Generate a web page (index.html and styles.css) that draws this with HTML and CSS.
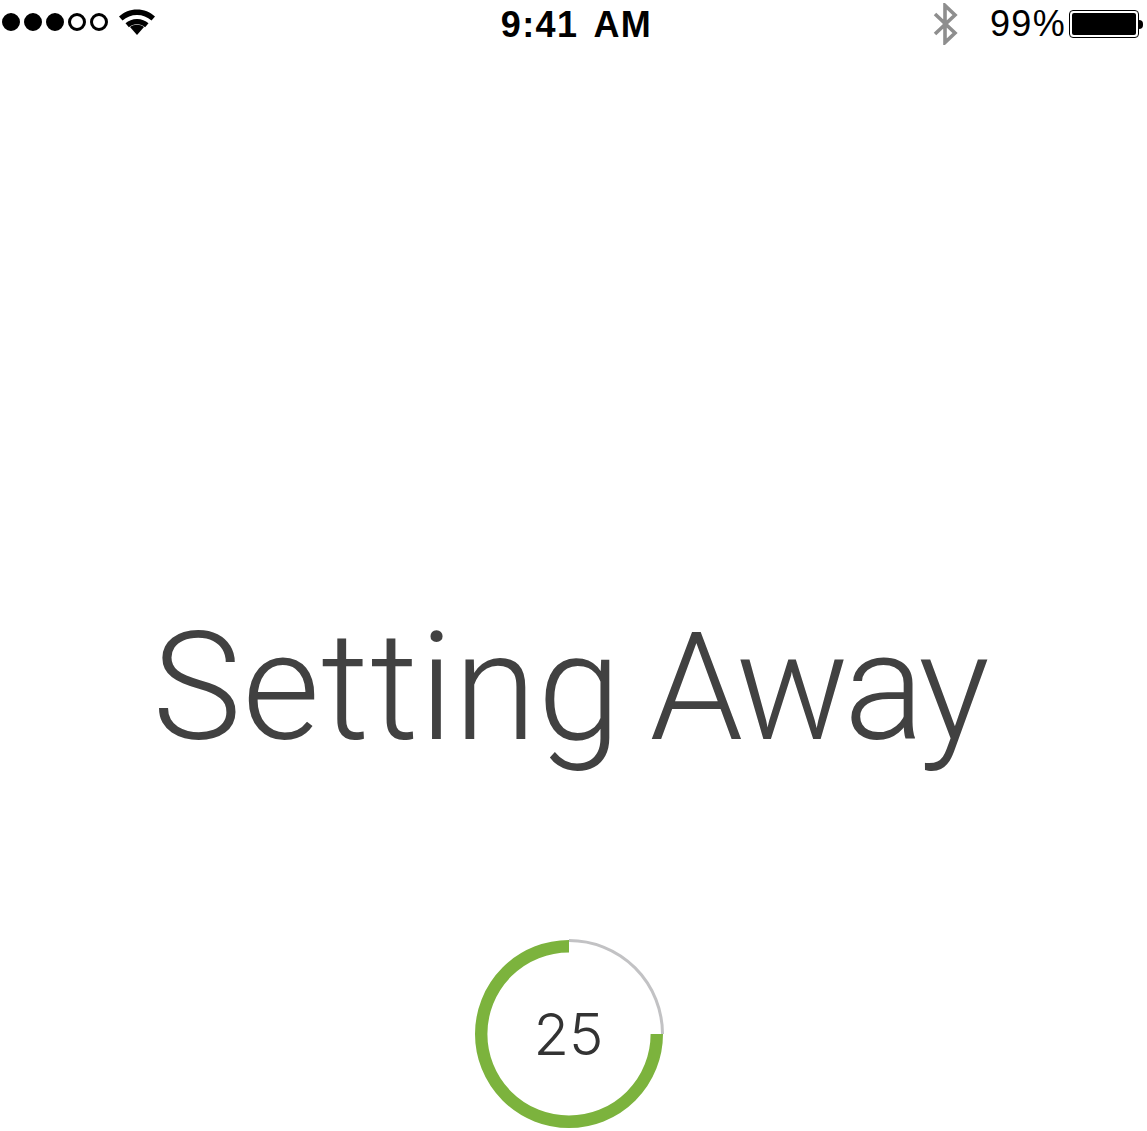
FILE: index.html
```html
<!DOCTYPE html>
<html lang="en">
<head>
<meta charset="utf-8">
<title>Setting Away</title>
<link rel="stylesheet" href="styles.css">
</head>
<body>
<main class="screen">
  <header class="status">
    <div class="status-left">
      <span class="dot on"></span><span class="dot on"></span><span class="dot on"></span><span class="dot"></span><span class="dot"></span>
      <svg class="wifi" width="38" height="30" viewBox="0 0 38 30"><path d="M19 2.500C12 2.500 6 5 1 9.500l3.500 4C8.500 10 13.500 8 19 8s10.500 2 14.500 5.500l3.500-4C32 5 26 2.500 19 2.500z"/><path d="M19 12c-4.500 0-8.500 1.600-11.500 4.300l3.400 3.900c2.200-1.900 5-3 8.100-3s5.900 1.100 8.100 3l3.400-3.900C27.500 13.600 23.500 12 19 12z"/><path d="M19 28l7-8c-1.900-1.400-4.300-2.200-7-2.200s-5.100.8-7 2.200z"/></svg>
    </div>
    <div class="clock">9:41 AM</div>
    <div class="status-right">
      <svg class="bt" width="26" height="42" viewBox="0 0 26 42"><path d="M3 11l20 19-10 9.500V2.500L23 12 3 31" fill="none" stroke="#8e8e8e" stroke-width="3.600"/></svg>
      <span class="pct">99%</span>
      <span class="battery"><span class="battery-fill"></span></span>
      <span class="nub"></span>
    </div>
  </header>
  <h1 class="title"><span class="word-one">Setting</span> <span class="word-two">Away</span></h1>
  <div class="ring">
    <svg width="190" height="190" viewBox="0 0 190 190">
      <path d="M95 1.500A93.500 93.500 0 0 1 188.500 95" fill="none" stroke="#c2c2c4" stroke-width="3"/>
      <path d="M182.800 95A87.800 87.800 0 1 1 95 7.200" fill="none" stroke="#7cb33d" stroke-width="12.400"/>
    </svg>
    <span class="count">25</span>
  </div>
</main>
</body>
</html>
```
FILE: styles.css
```css
html, body {
  margin: 0;
  padding: 0;
  background: #fff;
}
.screen {
  width: 1147px;
  height: 1131px;
  overflow: hidden;
  display: flex;
  flex-direction: column;
  align-items: center;
}
.status {
  box-sizing: border-box;
  width: 100%;
  height: 48px;
  display: grid;
  grid-template-columns: 1fr auto 1fr;
  align-items: center;
  padding: 0 4px 0 2px;
  font-family: "Liberation Sans", Arial, sans-serif;
  color: #000;
}
.status-left {
  display: flex;
  align-items: center;
  gap: 4px;
  height: 48px;
  padding-bottom: 4px;
  box-sizing: border-box;
}
.dot {
  box-sizing: border-box;
  width: 18px;
  height: 18px;
  border-radius: 50%;
  border: 3px solid #000;
}
.dot.on { background: #000; }
.wifi {
  margin-left: 6px;
  margin-bottom: 1px;
  fill: #000;
}
.clock {
  font-size: 36px;
  font-weight: 700;
  letter-spacing: 1.400px;
  word-spacing: 5px;
  margin: 2px 0 0 8px;
}
.status-right {
  display: flex;
  align-items: center;
  justify-content: flex-end;
}
.bt { margin-right: 32px; }
.pct {
  font-size: 36px;
  letter-spacing: 1.300px;
  margin-right: 3px;
}
.battery {
  box-sizing: border-box;
  width: 70px;
  height: 28px;
  border: 1.500px solid #000;
  border-radius: 4px;
  padding: 2px;
  display: flex;
}
.battery-fill {
  flex: 1;
  background: #000;
  border-radius: 2px;
}
.nub {
  width: 4px;
  height: 9px;
  background: #000;
  border-radius: 0 4px 4px 0;
}
.title {
  margin: 552px 10px 0 0;
  font-family: Roboto, "Noto Sans", sans-serif;
  font-weight: 300;
  font-size: 150px;
  word-spacing: -9px;
  line-height: 176px;
  color: #414141;
  white-space: nowrap;
}
.word-one { letter-spacing: 1px; }
.word-two { letter-spacing: -5px; }
.ring {
  position: relative;
  width: 190px;
  height: 190px;
  margin: 163px 0 0 -10px;
}
.ring svg { display: block; }
.count {
  position: absolute;
  inset: 0;
  display: flex;
  align-items: center;
  justify-content: center;
  font-family: Inter, sans-serif;
  font-weight: 300;
  font-size: 58px;
  color: #333;
}
```
